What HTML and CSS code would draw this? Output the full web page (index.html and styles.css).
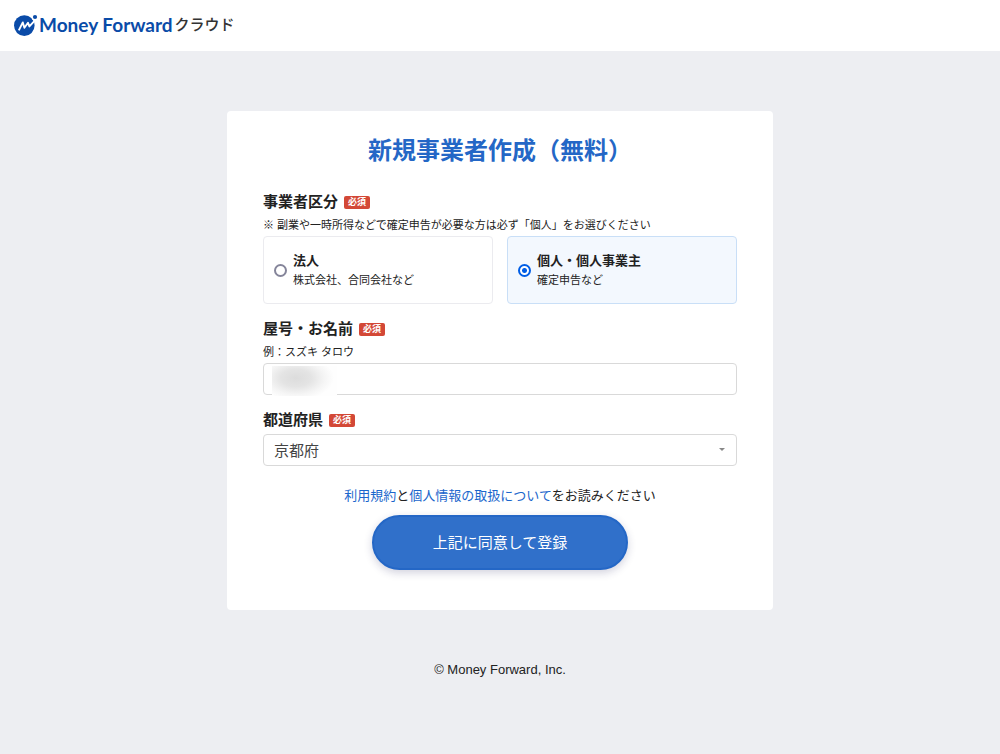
FILE: index.html
```html
<!DOCTYPE html>
<html lang="ja">
<head>
<meta charset="utf-8">
<meta name="viewport" content="width=device-width, initial-scale=1">
<title>新規事業者作成</title>
<link rel="stylesheet" href="styles.css">
</head>
<body>
<header class="header">
  <div class="logo">
    <svg class="logo-mark" viewBox="0 0 24 24" aria-hidden="true">
      <circle class="mark-fill" cx="10.3" cy="12.6" r="10.3"/>
      <circle class="mark-gap" cx="21" cy="4.2" r="3.4"/>
      <circle class="mark-fill" cx="21" cy="4" r="2.1"/>
      <path class="mark-line" d="M4.8 17.4 L8.8 9.4 L10.4 14.8 L14 9.8 L15.4 13.4 L21 7.4"/>
    </svg>
    <span class="logo-name">Money Forward</span>
    <span class="logo-product">クラウド</span>
  </div>
</header>
<main class="main">
  <form class="card">
    <h1 class="title">新規事業者作成（無料）</h1>
    <fieldset class="field">
      <legend class="label">事業者区分<span class="badge">必須</span></legend>
      <p class="note">※ 副業や一時所得などで確定申告が必要な方は必ず「個人」をお選びください</p>
      <div class="options">
        <label class="option">
          <input class="radio" type="radio" name="type">
          <span class="option-text"><strong class="option-name">法人</strong><span class="option-desc">株式会社、合同会社など</span></span>
        </label>
        <label class="option option-selected">
          <input class="radio" type="radio" name="type" checked>
          <span class="option-text"><strong class="option-name">個人・個人事業主</strong><span class="option-desc">確定申告など</span></span>
        </label>
      </div>
    </fieldset>
    <div class="field">
      <label class="label" for="name">屋号・お名前<span class="badge">必須</span></label>
      <p class="note">例：スズキ タロウ</p>
      <div class="masked">
        <input class="control" id="name" type="text">
        <span class="mask"></span>
      </div>
    </div>
    <div class="field">
      <label class="label" for="pref">都道府県<span class="badge">必須</span></label>
      <div class="select-box">
        <select class="control" id="pref"><option>京都府</option></select>
      </div>
    </div>
    <p class="terms"><a class="link" href="#">利用規約</a>と<a class="link" href="#">個人情報の取扱について</a>をお読みください</p>
    <button class="submit" type="submit">上記に同意して登録</button>
  </form>
</main>
<footer class="footer">© Money Forward, Inc.</footer>
</body>
</html>
```
FILE: styles.css
```css
* {
  box-sizing: border-box;
}

body {
  margin: 0;
  min-height: 100vh;
  background: #edeef2;
  color: #222;
  font-family: "Liberation Sans", "Noto Sans CJK JP", sans-serif;
}

.header {
  padding: 12px 14px 14px;
  background: #fff;
}

.logo {
  display: flex;
  align-items: center;
  height: 25px;
}

.logo-mark {
  width: 24px;
  height: 24px;
}

.mark-fill {
  fill: #0a4ba8;
}

.mark-gap {
  fill: #fff;
}

.mark-line {
  fill: none;
  stroke: #fff;
  stroke-width: 1.9;
  stroke-linejoin: round;
}

.logo-name {
  margin-left: 1px;
  color: #0a4ba8;
  font: 700 19px/24px Lato, sans-serif;
}

.logo-product {
  margin-left: 2px;
  color: #333;
  font-size: 15px;
  font-weight: 500;
  line-height: 24px;
}

.main {
  padding: 60px 16px 50px;
}

.card {
  max-width: 546px;
  margin: 0 auto;
  padding: 24px 36px 40px;
  border-radius: 4px;
  background: #fff;
}

.title {
  margin: 0 0 25px;
  color: #2467c6;
  font-size: 24px;
  line-height: 32px;
  text-align: center;
}

.field {
  min-width: 0;
  margin: 0 0 15px;
  padding: 0;
  border: 0;
}

.label {
  display: flex;
  align-items: center;
  gap: 6px;
  padding: 0;
  font-size: 15px;
  font-weight: 700;
  line-height: 20px;
}

.badge {
  padding: 0 4px;
  border-radius: 2px;
  background: #d34836;
  color: #fff;
  font-size: 9px;
  line-height: 13px;
}

.note {
  margin: 4px 0 2px;
  font-size: 11px;
  line-height: 18px;
}

.options {
  display: grid;
  grid-template-columns: 1fr 1fr;
  gap: 14px;
}

.option {
  display: flex;
  align-items: center;
  gap: 6px;
  padding: 14px 10px;
  border: 1px solid #ebebef;
  border-radius: 4px;
}

.option-selected {
  border-color: #c9dff7;
  background: #f3f8fe;
}

.radio {
  flex: none;
  appearance: none;
  width: 13px;
  height: 13px;
  margin: 0;
  border: 2px solid #85859a;
  border-radius: 50%;
  background: #fff;
}

.radio:checked {
  border-color: #005ee6;
  background: radial-gradient(circle, #005ee6 2px, #fff 3px);
}

.option-text {
  display: flex;
  flex-direction: column;
}

.option-name {
  font-size: 13px;
  line-height: 20px;
}

.option-desc {
  font-size: 11px;
  line-height: 18px;
}

.masked {
  position: relative;
}

.mask {
  position: absolute;
  top: 3px;
  left: 9px;
  width: 65px;
  height: 30px;
  background: radial-gradient(ellipse 38px 22px at 24px 12px, #dcdcdc 0%, #e4e4e4 40%, #f5f5f5 75%, #fefefe 100%);
}

.control {
  display: block;
  width: 100%;
  height: 32px;
  padding: 0 10px;
  border: 1px solid #d9d9d9;
  border-radius: 4px;
  background: #fff;
  color: #444;
  font: inherit;
  font-size: 15px;
  appearance: none;
}

.select-box {
  position: relative;
  margin-top: 4px;
}

.select-box::after {
  content: "";
  position: absolute;
  top: 14px;
  right: 12px;
  border: 3px solid transparent;
  border-top-color: #888;
  border-bottom: 0;
  pointer-events: none;
}

.terms {
  margin: 20px 0 9px;
  font-size: 13px;
  line-height: 20px;
  text-align: center;
}

.link {
  color: #1a66cc;
  text-decoration: none;
}

.submit {
  display: block;
  width: 100%;
  max-width: 256px;
  margin: 0 auto;
  padding: 15px;
  border: 2px solid #2467c6;
  border-radius: 28px;
  background: #3070ca;
  box-shadow: 0 3px 8px rgba(30, 30, 90, 0.2);
  color: #fff;
  font: inherit;
  font-size: 15px;
  line-height: 21px;
}

.footer {
  padding: 0 16px 24px;
  font-size: 13px;
  line-height: 20px;
  text-align: center;
}
```
